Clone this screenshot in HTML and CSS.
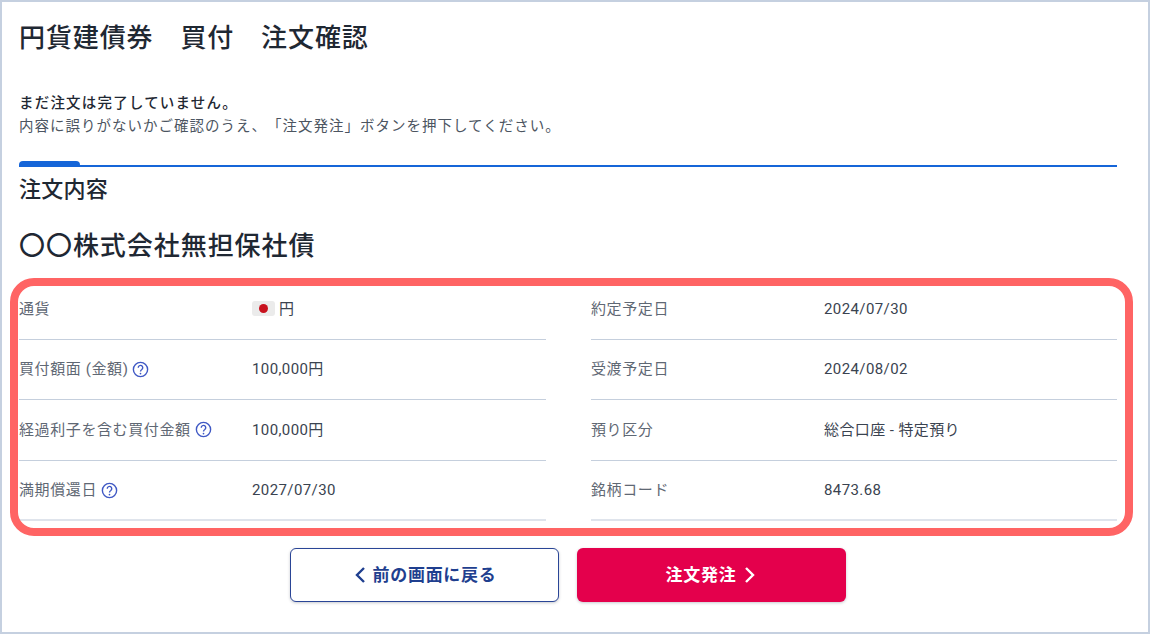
FILE: index.html
```html
<!DOCTYPE html>
<html lang="ja">
<head>
<meta charset="utf-8">
<title>注文確認</title>
<link rel="stylesheet" href="styles.css">
</head>
<body>
<main class="page">
  <h1 class="title">円貨建債券　買付　注文確認</h1>
  <div class="notice">
    <p class="notice-strong">まだ注文は完了していません。</p>
    <p class="notice-text">内容に誤りがないかご確認のうえ、「注文発注」ボタンを押下してください。</p>
  </div>
  <div class="section-rule"><span class="section-tab"></span></div>
  <h2 class="section-title">注文内容</h2>
  <h3 class="bond-name">〇〇株式会社無担保社債</h3>
  <div class="details">
    <div class="detail-column">
      <div class="row"><span class="label">通貨</span><span class="value"><span class="flag"><span class="flag-dot"></span></span>円</span></div>
      <div class="row"><span class="label">買付額面 (金額)<svg class="help" viewBox="0 0 16 16"><circle cx="8" cy="8" r="6.7"/><path d="M5.9 6.3a2.1 2.1 0 1 1 3.3 1.7c-.8.5-1.2 1-1.2 1.9"/><circle class="help-dot" cx="8" cy="11.8" r=".8"/></svg></span><span class="value">100,000円</span></div>
      <div class="row"><span class="label">経過利子を含む買付金額<svg class="help" viewBox="0 0 16 16"><circle cx="8" cy="8" r="6.7"/><path d="M5.9 6.3a2.1 2.1 0 1 1 3.3 1.7c-.8.5-1.2 1-1.2 1.9"/><circle class="help-dot" cx="8" cy="11.8" r=".8"/></svg></span><span class="value">100,000円</span></div>
      <div class="row"><span class="label">満期償還日<svg class="help" viewBox="0 0 16 16"><circle cx="8" cy="8" r="6.7"/><path d="M5.9 6.3a2.1 2.1 0 1 1 3.3 1.7c-.8.5-1.2 1-1.2 1.9"/><circle class="help-dot" cx="8" cy="11.8" r=".8"/></svg></span><span class="value">2027/07/30</span></div>
    </div>
    <div class="detail-column">
      <div class="row"><span class="label">約定予定日</span><span class="value">2024/07/30</span></div>
      <div class="row"><span class="label">受渡予定日</span><span class="value">2024/08/02</span></div>
      <div class="row"><span class="label">預り区分</span><span class="value">総合口座 - 特定預り</span></div>
      <div class="row"><span class="label">銘柄コード</span><span class="value">8473.68</span></div>
    </div>
    <div class="highlight"></div>
  </div>
  <div class="actions">
    <button class="btn btn-back"><svg class="chev" viewBox="0 0 14 18"><path d="M11 2 4 9l7 7"/></svg><span class="btn-label">前の画面に戻る</span></button>
    <button class="btn btn-submit"><span class="btn-label">注文発注</span><svg class="chev" viewBox="0 0 14 18"><path d="M3 2l7 7-7 7"/></svg></button>
  </div>
</main>
</body>
</html>
```
FILE: styles.css
```css
* { box-sizing: border-box; }
html, body { margin: 0; padding: 0; background: #fff; }
body { font-family: Roboto, "Noto Sans CJK JP", sans-serif; color: #1f2833; text-spacing-trim: space-all; }
.page {
  width: 1150px; height: 634px; overflow: hidden;
  border: 2px solid #c5d0e0;
  padding: 0 31px 0 17px; background: #fff;
}
.title { margin: 17px 0 0; font-size: 26px; line-height: 38px; font-weight: 500; letter-spacing: .9px; color: #1f2833; }
.notice { margin-top: 35px; line-height: 23px; }
.notice p { margin: 0; }
.notice-strong { font-weight: 500; color: #1f2833; font-size: 14.5px; letter-spacing: 1.2px; white-space: nowrap; }
.notice-text { color: #4c5561; font-size: 14.5px; letter-spacing: 1px; white-space: nowrap; }
.section-rule { position: relative; margin-top: 27px; height: 2px; background: #1565d8; }
.section-tab { position: absolute; left: 0; bottom: 2px; width: 61px; height: 4px; background: #1565d8; border-radius: 4px 4px 0 0; }
.section-title { margin: 8px 0 0; font-size: 22px; line-height: 30px; font-weight: 500; letter-spacing: .25px; }
.bond-name { margin: 21px 0 0; font-size: 26px; line-height: 40px; font-weight: 500; letter-spacing: .95px; }
.details { position: relative; display: grid; grid-template-columns: 527px 526px; column-gap: 45px; margin-top: 13px; }
.detail-column { display: flex; flex-direction: column; }
.row { display: flex; align-items: center; height: 60.6px; border-bottom: 1px solid #c5cfdd; font-size: 15px; line-height: 20px; }
.row:last-child { border-bottom: 2px solid #dfe4ec; }
.label { width: 233px; flex: none; display: flex; align-items: center; color: #5f6874; letter-spacing: .6px; white-space: nowrap; }
.value { display: flex; align-items: center; color: #3a4350; letter-spacing: .4px; }
.flag { display: flex; align-items: center; justify-content: center; width: 23px; height: 15px; margin-right: 4px; background: #ebebeb; border-radius: 3px; }
.flag-dot { width: 9px; height: 9px; border-radius: 50%; background: #c8121e; }
.help { width: 17px; height: 17px; margin-left: 4px; fill: none; stroke: #3f58c4; stroke-width: 1.3; flex: none; }
.help-dot { fill: #3f58c4; stroke: none; }
.highlight { position: absolute; left: -9px; right: -16px; top: -1px; bottom: -15px; border: 8px solid #ff6464; border-radius: 24px; pointer-events: none; }
.actions { display: flex; justify-content: center; gap: 18px; margin-top: 27px; }
.btn { display: flex; align-items: center; justify-content: center; width: 269px; height: 54px; border-radius: 6px; font: 700 17px Roboto, "Noto Sans CJK JP", sans-serif; letter-spacing: .7px; box-shadow: 0 1px 3px rgba(30, 40, 60, .25); }
.btn-label { margin-top: -3px; }
.btn-back { background: #fff; border: 1px solid #2a4596; color: #1f3f8f; }
.btn-submit { background: #e4004c; border: 0; color: #fff; }
.chev { width: 14px; height: 18px; fill: none; stroke: currentColor; stroke-width: 2.4; }
.btn-back .chev { margin-right: 6px; }
.btn-submit .chev { margin-left: 7px; }
```
